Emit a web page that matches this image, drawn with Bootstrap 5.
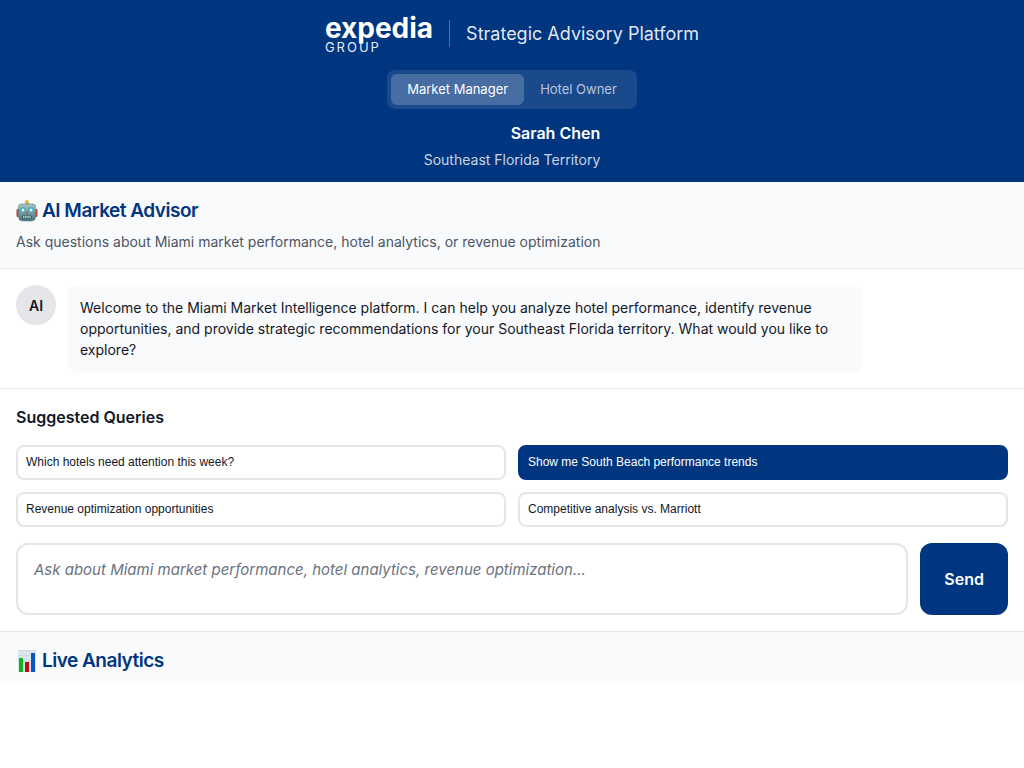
<!DOCTYPE html>
<html lang="en">
<head>
<meta charset="utf-8">
<meta name="viewport" content="width=device-width, initial-scale=1">
<title>Strategic Advisory Platform</title>
<link href="https://cdn.jsdelivr.net/npm/bootstrap@5.3.0/dist/css/bootstrap.min.css" rel="stylesheet">
<style>
:root { --navy: #00357f; --mist: #f9fafc; --line: #e5e5ea; --ink: #111827; --muted: #4b5563; }
body { font-family: Inter, "Liberation Sans", sans-serif; color: var(--ink); font-size: 14px; line-height: 21px; }
.topbar { background: var(--navy); padding: 16px 16px 12px; }
.brand-name { font-size: 28px; line-height: 24px; font-weight: 700; }
.brand-sub { font-size: 13px; line-height: 14px; letter-spacing: 2px; opacity: .9; }
.platform { font-size: 18px; line-height: 27px; color: rgba(255,255,255,.9); border-left: 1px solid rgba(255,255,255,.3); }
.role-switch { background: rgba(255,255,255,.1); border-radius: 8px; padding: 4px; }
.role-btn { font-size: 13px; line-height: 19px; padding: 6px 16px; border: 0; border-radius: 6px; background: transparent; color: rgba(255,255,255,.7); }
.role-btn.active { background: rgba(255,255,255,.2); color: #fff; }
.sub-title { font-size: 16px; line-height: 24px; font-weight: 600; }
.stack-md { margin-top: 12px; }
.user-area { color: rgba(255,255,255,.8); }
.panel-head { background: var(--mist); padding: 16px 16px 0; }
.panel-title { font-size: 19px; line-height: 25px; font-weight: 600; color: var(--navy); letter-spacing: -0.5px; gap: 4px; }
.panel-note { color: var(--muted); }
.rule-b { border-bottom: 1px solid var(--line); }
.avatar { width: 40px; height: 40px; background: var(--line); font-weight: 600; }
.chat-row { gap: 12px; }
.bubble { background: var(--mist); border-radius: 8px; padding: 12px; max-width: 80%; }
.query-grid { grid-template-columns: 1fr 1fr; gap: 12px; }
.query { font: 12px/15px "Liberation Sans", Arial, sans-serif; padding: 8px; border: 2px solid var(--line); border-radius: 8px; background: #fff; color: var(--ink); text-align: left; }
.query.active { background: var(--navy); border-color: var(--navy); color: #fff; }
.ask { min-width: 0; height: 72px; border: 2px solid var(--line); border-radius: 12px; padding: 13px 16px; font-size: 15px; line-height: 24px; resize: none; }
.ask::placeholder { color: #6b7280; font-style: italic; }
.send { padding: 0 24px; border: 0; border-radius: 12px; background: var(--navy); font-size: 16px; font-weight: 600; color: #fff; }
@media (max-width: 575px) { .query-grid { grid-template-columns: 1fr; } }
</style>
</head>
<body>
<header class="topbar text-white d-flex flex-column align-items-center">
  <div class="d-flex align-items-start gap-3">
    <div>
      <div class="brand-name">expedia</div>
      <div class="brand-sub">GROUP</div>
    </div>
    <div class="platform ps-3 mt-1">Strategic Advisory Platform</div>
  </div>
  <div class="role-switch d-flex mt-3">
    <button type="button" class="role-btn active">Market Manager</button>
    <button type="button" class="role-btn">Hotel Owner</button>
  </div>
  <div class="stack-md text-end">
    <div class="sub-title mb-1">Sarah Chen</div>
    <div class="user-area">Southeast Florida Territory</div>
  </div>
</header>

<main>
  <section class="panel-head rule-b pb-3">
    <h2 class="panel-title d-flex align-items-center mb-2">
      <svg width="22" height="22" viewBox="0 0 22 22" aria-hidden="true">
        <defs>
          <linearGradient id="steel" x1="0" y1="0" x2="0" y2="1"><stop offset="0" stop-color="#a9c4c4"/><stop offset="1" stop-color="#45777c"/></linearGradient>
        </defs>
        <rect x="0.5" y="9" width="3" height="8" rx="1" fill="#b5453f"/>
        <rect x="18.500" y="9" width="3" height="8" rx="1" fill="#b5453f"/>
        <path d="M8.500 4.500L9.500 2h3l1 2.500z" fill="#789aa0"/>
        <circle cx="11" cy="2" r="1.900" fill="#edb62f"/>
        <path d="M5 4h12q2.500 0 2.500 3v10q0 4-4 4h-9q-4 0-4-4V7q0-3 2.500-3z" fill="url(#steel)" stroke="#60868a" stroke-width=".6"/>
        <circle cx="7" cy="10" r="2.800" fill="#37adbd"/><circle cx="15" cy="10" r="2.800" fill="#37adbd"/>
        <circle cx="7" cy="10" r="1.500" fill="#e8ffff"/><circle cx="15" cy="10" r="1.500" fill="#e8ffff"/>
        <path d="M11 11l1.500 3h-3z" fill="#c5483d"/>
        <rect x="6" y="15.500" width="10" height="3" rx="1" fill="#315c64"/>
        <path d="M7 17h8" stroke="#d8e9e6" stroke-width="1.500" stroke-dasharray="1.500 .6"/>
      </svg>
      AI Market Advisor
    </h2>
    <p class="panel-note mb-0">Ask questions about Miami market performance, hotel analytics, or revenue optimization</p>
  </section>

  <section class="chat-row p-3 rule-b d-flex align-items-start">
    <div class="avatar rounded-circle d-flex align-items-center justify-content-center flex-shrink-0">AI</div>
    <p class="bubble mb-0">Welcome to the Miami Market Intelligence platform. I can help you analyze hotel performance, identify revenue opportunities, and provide strategic recommendations for your Southeast Florida territory. What would you like to explore?</p>
  </section>

  <section class="p-3 rule-b">
    <h3 class="sub-title mb-3">Suggested Queries</h3>
    <div class="query-grid d-grid mb-3">
      <button type="button" class="query">Which hotels need attention this week?</button>
      <button type="button" class="query active">Show me South Beach performance trends</button>
      <button type="button" class="query">Revenue optimization opportunities</button>
      <button type="button" class="query">Competitive analysis vs. Marriott</button>
    </div>
    <form class="chat-row d-flex">
      <textarea class="ask flex-grow-1" aria-label="Your question" placeholder="Ask about Miami market performance, hotel analytics, revenue optimization..."></textarea>
      <button type="button" class="send">Send</button>
    </form>
  </section>

  <section class="panel-head">
    <h2 class="panel-title d-flex align-items-center mb-0 pb-2">
      <svg width="22" height="22" viewBox="0 0 22 22" aria-hidden="true">
        <rect x="2" y="0" width="18" height="22" fill="#dbe5ee"/>
        <path d="M2 .5h18M2 5.500h18M2 11h18M2 16h18" stroke="#c8d5df" stroke-width=".7"/>
        <rect x="3" y="8" width="4" height="14" fill="#0cb51c"/>
        <rect x="9" y="12" width="4" height="10" fill="#bd0c1c"/>
        <rect x="15" y="3" width="4" height="19" fill="#0757bd"/>
      </svg>
      Live Analytics
    </h2>
  </section>
</main>
<script src="https://cdn.jsdelivr.net/npm/bootstrap@5.3.0/dist/js/bootstrap.bundle.min.js"></script>
</body>
</html>
